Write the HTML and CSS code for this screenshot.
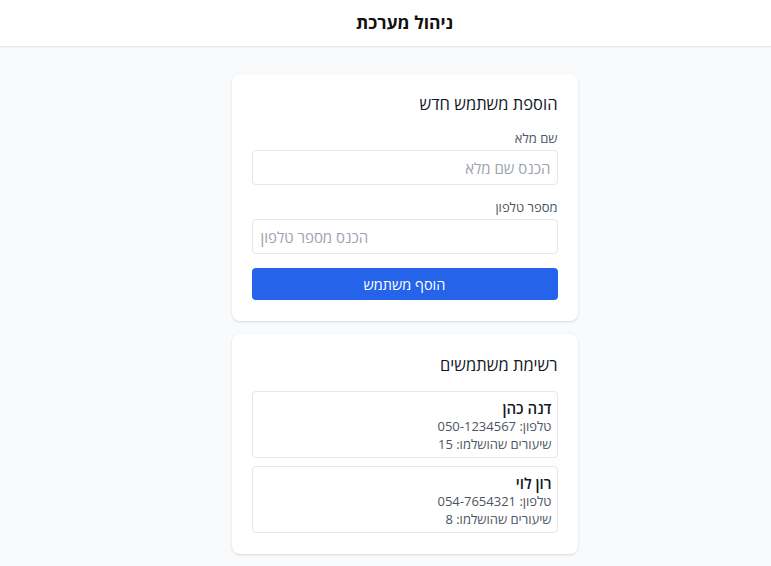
FILE: index.html
```html
<!DOCTYPE html>
<html lang="he" dir="rtl">
<head>
<meta charset="utf-8">
<title>ניהול מערכת</title>
<link rel="stylesheet" href="styles.css">
</head>
<body>
<header class="topbar">
  <h1 class="topbar-title">ניהול מערכת</h1>
</header>
<main class="content">
  <section class="card">
    <h2 class="card-title">הוספת משתמש חדש</h2>
    <div class="field">
      <label class="field-label" for="name">שם מלא</label>
      <input class="field-input" id="name" type="text" placeholder="הכנס שם מלא">
    </div>
    <div class="field">
      <label class="field-label" for="phone">מספר טלפון</label>
      <input class="field-input field-input-ltr" id="phone" type="tel" dir="ltr" placeholder="הכנס מספר טלפון">
    </div>
    <button class="btn-primary" type="button">הוסף משתמש</button>
  </section>
  <section class="card">
    <h2 class="card-title list-title">רשימת משתמשים</h2>
    <ul class="user-list">
      <li class="user-item">
        <div class="user-name">דנה כהן</div>
        <div class="user-meta">טלפון: 050-1234567</div>
        <div class="user-meta">שיעורים שהושלמו: 15</div>
      </li>
      <li class="user-item">
        <div class="user-name">רון לוי</div>
        <div class="user-meta">טלפון: 054-7654321</div>
        <div class="user-meta">שיעורים שהושלמו: 8</div>
      </li>
    </ul>
  </section>
</main>
</body>
</html>
```
FILE: styles.css
```css
* { box-sizing: border-box; }
html, body { margin: 0; padding: 0; }
body {
  background: #f9fafb;
  font-family: "Open Sans", "Liberation Sans", sans-serif;
  color: #111827;
}
.topbar {
  height: 47px;
  background: #ffffff;
  border-bottom: 1px solid #e5e7eb;
  box-shadow: 0 1px 2px rgba(0,0,0,0.04);
  display: flex;
  align-items: center;
  justify-content: center;
  padding-left: 38px;
}
.topbar-title {
  margin: 0;
  font-size: 17.5px;
  font-weight: 700;
  line-height: 22px;
  color: #111;
  padding-bottom: 2px;
}
.content {
  display: flex;
  flex-direction: column;
  align-items: center;
  gap: 13px;
  padding: 27px 0 20px 38px;
}
.card {
  width: 346px;
  background: #ffffff;
  border-radius: 8px;
  box-shadow: 0 1px 3px rgba(0,0,0,0.1), 0 1px 2px rgba(0,0,0,0.04);
  padding: 20px 20px 21px;
}
.card-title {
  margin: 0 0 14px;
  font-size: 16.5px;
  font-weight: 500;
  line-height: 20px;
  color: #111827;
}
.list-title {
  margin-top: 1px;
  margin-bottom: 16px;
}
.field {
  display: flex;
  flex-direction: column;
  margin-bottom: 12px;
}
.field + .field { margin-bottom: 14px; }
.field-label {
  font-size: 13px;
  line-height: 20px;
  color: #4b5563;
  margin-bottom: 2px;
}
.field-input {
  height: 35px;
  border: 1px solid #e5e7eb;
  border-radius: 4px;
  padding: 0 6px;
  font-family: inherit;
  font-size: 15px;
  color: #111827;
  background: #fff;
  outline: none;
}
.field-input-ltr { text-align: left; padding-left: 8px; }
.field-input::placeholder { color: #9ca3af; }
.btn-primary {
  display: block;
  width: 100%;
  height: 32px;
  border: none;
  border-radius: 4px;
  background: #2563eb;
  color: #ffffff;
  font-family: inherit;
  font-size: 14.5px;
  cursor: pointer;
}
.user-list {
  list-style: none;
  margin: 0;
  padding: 0;
  display: flex;
  flex-direction: column;
  gap: 8px;
}
.user-item {
  border: 1px solid #e5e7eb;
  border-radius: 4px;
  padding: 7px 5px 4px;
}
.user-name {
  font-size: 15px;
  font-weight: 600;
  line-height: 18px;
  color: #111827;
}
.user-meta {
  font-size: 13px;
  line-height: 18px;
  color: #4b5563;
}
```
